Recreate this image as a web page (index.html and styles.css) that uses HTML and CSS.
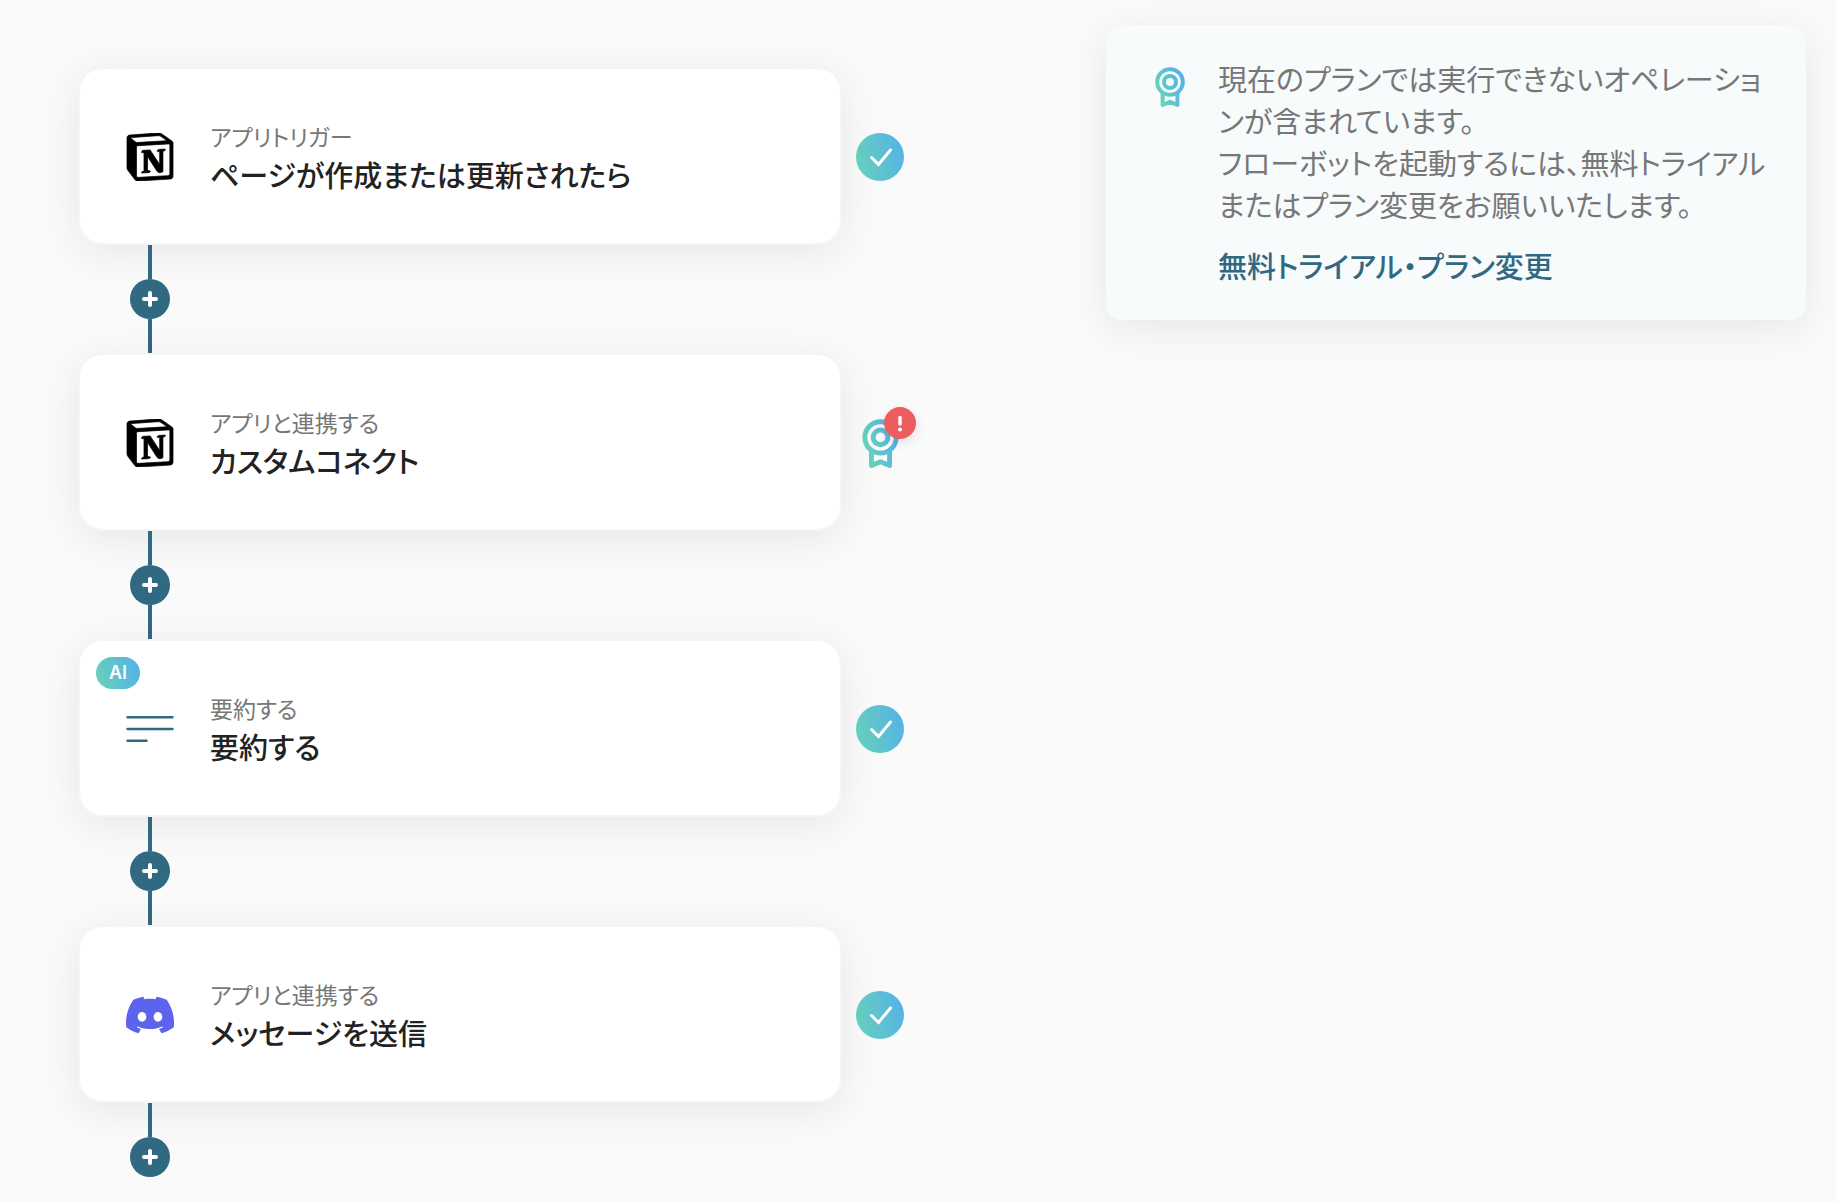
FILE: index.html
```html
<!DOCTYPE html>
<html lang="ja">
<head>
<meta charset="utf-8">
<meta name="viewport" content="width=device-width, initial-scale=1">
<title>フローボット</title>
<link rel="stylesheet" href="styles.css">
</head>
<body>
<svg class="defs" aria-hidden="true">
  <defs>
    <linearGradient id="brand" gradientUnits="userSpaceOnUse" x1="2" y1="24" x2="29" y2="14">
      <stop offset="0" stop-color="#67d2b8"/>
      <stop offset="1" stop-color="#55b0ea"/>
    </linearGradient>
    <symbol id="award" viewBox="0 0 30 40">
      <g fill="none" stroke="url(#brand)" stroke-width="4" stroke-linejoin="round" stroke-linecap="round">
        <circle cx="15" cy="15" r="12.800"/>
        <circle cx="15" cy="15" r="6"/>
        <path d="M7.600 26.500V38L15 34.800l7.400 3.200V26.500"/>
      </g>
    </symbol>
    <symbol id="check" viewBox="0 0 48 48">
      <path d="M15.500 24.500l7 7L34.500 17" fill="none" stroke="#fff" stroke-width="3" stroke-linecap="round" stroke-linejoin="miter"/>
    </symbol>
    <symbol id="plus" viewBox="0 0 40 40">
      <path d="M20 14v12M14 20h12" fill="none" stroke="#fff" stroke-width="4" stroke-linecap="round"/>
    </symbol>
    <symbol id="notion" viewBox="0 0 24 24">
      <path d="M4.459 4.208c.746.606 1.026.56 2.428.466l13.215-.793c.28 0 .047-.28-.046-.326L17.86 1.968c-.42-.326-.981-.7-2.055-.607L3.01 2.295c-.466.046-.56.28-.374.466zm.793 3.08v13.904c0 .747.373 1.027 1.214.98l14.523-.84c.841-.046.935-.56.935-1.167V6.354c0-.606-.233-.933-.748-.887l-15.177.887c-.56.047-.747.327-.747.933zm14.337.745c.093.42 0 .84-.42.888l-.7.14v10.264c-.608.327-1.168.514-1.635.514-.748 0-.935-.234-1.495-.933l-4.577-7.186v6.952L12.21 19s0 .84-1.168.84l-3.222.186c-.093-.186 0-.653.327-.746l.84-.233V9.854L7.822 9.76c-.094-.42.14-1.026.793-1.073l3.456-.233 4.764 7.279v-6.44l-1.215-.139c-.093-.514.28-.887.747-.933zM1.936 1.035l13.31-.98c1.634-.14 2.055-.047 3.082.7l4.249 2.986c.7.513.934.653.934 1.213v16.378c0 1.026-.373 1.634-1.680 1.726l-15.458.934c-.98.047-1.448-.093-1.962-.747l-3.129-4.060c-.56-.747-.793-1.306-.793-1.960V2.667c0-.839.374-1.540 1.447-1.632z" stroke="#000" stroke-width=".35"/>
    </symbol>
    <symbol id="discord" viewBox="0 0 24 24">
      <path fill="#5c64ee" d="M20.317 4.3698a19.7913 19.7913 0 00-4.8851-1.5152.0741.0741 0 00-.0785.0371c-.211.3753-.4447.8648-.6083 1.2495-1.8447-.2762-3.68-.2762-5.4868 0-.1636-.3933-.4058-.8742-.6177-1.2495a.077.077 0 00-.0785-.037 19.7363 19.7363 0 00-4.8852 1.515.0699.0699 0 00-.0321.0277C.5334 9.0458-.319 13.5799.0992 18.0578a.0824.0824 0 00.0312.0561c2.0528 1.5076 4.0413 2.4228 5.9929 3.0294a.0777.0777 0 00.0842-.0276c.4616-.6304.8731-1.2952 1.226-1.9942a.076.076 0 00-.0416-.1057c-.6528-.2476-1.2743-.5495-1.8722-.8923a.077.077 0 01-.0076-.1277c.1258-.0943.2517-.1923.3718-.2914a.0743.0743 0 01.0776-.0105c3.9278 1.7933 8.18 1.7933 12.0614 0a.0739.0739 0 01.0785.0095c.1202.099.246.1981.3728.2924a.077.077 0 01-.0066.1276 12.2986 12.2986 0 01-1.873.8914.0766.0766 0 00-.0407.1067c.3604.698.7719 1.3628 1.225 1.9932a.076.076 0 00.0842.0286c1.961-.6067 3.9495-1.5219 6.0023-3.0294a.077.077 0 00.0313-.0552c.5004-5.177-.8382-9.6739-3.5485-13.6604a.061.061 0 00-.0312-.0286zM8.02 15.3312c-1.1825 0-2.1569-1.0857-2.1569-2.419 0-1.3332.9555-2.4189 2.157-2.4189 1.2108 0 2.1757 1.0952 2.1568 2.419 0 1.3332-.9555 2.4189-2.1569 2.4189zm7.9748 0c-1.1825 0-2.1569-1.0857-2.1569-2.419 0-1.3332.9554-2.4189 2.1569-2.4189 1.2108 0 2.1757 1.0952 2.1568 2.419 0 1.3332-.946 2.4189-2.1568 2.4189Z"/>
    </symbol>
    <symbol id="lines" viewBox="0 0 48 48">
      <path d="M1.500 12.200h45M1.500 24h45M1.500 35.800h19" fill="none" stroke="#316882" stroke-width="2.400" stroke-linecap="round"/>
    </symbol>
  </defs>
</svg>

<main class="page">
  <ol class="flow">
    <li>
      <div class="step">
        <article class="card">
          <svg class="app-icon" aria-hidden="true"><use href="#notion"/></svg>
          <div>
            <p class="kind">アプリトリガー</p>
            <h2 class="title">ページが作成または更新されたら</h2>
          </div>
        </article>
        <span class="status done"><svg aria-hidden="true"><use href="#check"/></svg></span>
      </div>
      <div class="connector">
        <button type="button" class="add" aria-label="追加"><svg aria-hidden="true"><use href="#plus"/></svg></button>
      </div>
    </li>
    <li>
      <div class="step">
        <article class="card">
          <svg class="app-icon" aria-hidden="true"><use href="#notion"/></svg>
          <div>
            <p class="kind">アプリと連携する</p>
            <h2 class="title">カスタムコネクト</h2>
          </div>
        </article>
        <span class="status locked">
          <svg class="award-large" aria-hidden="true"><use href="#award"/></svg>
          <svg class="alert" viewBox="0 0 32 32" aria-hidden="true">
            <path d="M16 10.500v6.500" fill="none" stroke="#fff" stroke-width="3.400" stroke-linecap="round"/>
            <circle cx="16" cy="22.500" r="2" fill="#fff"/>
          </svg>
        </span>
      </div>
      <div class="connector">
        <button type="button" class="add" aria-label="追加"><svg aria-hidden="true"><use href="#plus"/></svg></button>
      </div>
    </li>
    <li>
      <div class="step">
        <article class="card">
          <span class="ai-badge">AI</span>
          <svg class="app-icon" aria-hidden="true"><use href="#lines"/></svg>
          <div>
            <p class="kind">要約する</p>
            <h2 class="title">要約する</h2>
          </div>
        </article>
        <span class="status done"><svg aria-hidden="true"><use href="#check"/></svg></span>
      </div>
      <div class="connector">
        <button type="button" class="add" aria-label="追加"><svg aria-hidden="true"><use href="#plus"/></svg></button>
      </div>
    </li>
    <li>
      <div class="step">
        <article class="card">
          <svg class="app-icon" aria-hidden="true"><use href="#discord"/></svg>
          <div>
            <p class="kind">アプリと連携する</p>
            <h2 class="title">メッセージを送信</h2>
          </div>
        </article>
        <span class="status done"><svg aria-hidden="true"><use href="#check"/></svg></span>
      </div>
      <div class="connector last">
        <button type="button" class="add" aria-label="追加"><svg aria-hidden="true"><use href="#plus"/></svg></button>
      </div>
    </li>
  </ol>

  <aside class="notice">
    <svg class="award-small" aria-hidden="true"><use href="#award"/></svg>
    <div class="notice-body">
      <p>現在のプランでは実行できないオペレーションが含まれています。<br>フローボットを起動するには、無料トライアルまたはプラン変更をお願いいたします。</p>
      <a href="#plan">無料トライアル・プラン変更</a>
    </div>
  </aside>
</main>
</body>
</html>
```
FILE: styles.css
```css
* {
  box-sizing: border-box;
}

body {
  margin: 0;
  background: #fafafa;
  color: #222;
  font-family: "Noto Sans CJK JP", "Noto Sans", sans-serif;
  font-size: 29px;
  font-feature-settings: "palt";
}

p,
h2 {
  margin: 0;
}

.defs {
  position: absolute;
  width: 0;
  height: 0;
}

.page {
  display: grid;
  grid-template-columns: minmax(0, 826fr) minmax(0, 700fr);
  column-gap: 202px;
  align-items: start;
  padding: 25px 30px 25px 78px;
}

.flow {
  margin: 0;
  padding: 42px 0 0;
  list-style: none;
}

.step {
  display: flex;
  align-items: center;
  gap: 14px;
}

.card {
  position: relative;
  display: flex;
  flex: 1;
  align-items: center;
  gap: 36px;
  min-height: 178px;
  padding: 34px 44px 32px 46px;
  background: #fff;
  background-clip: padding-box;
  border: 2px solid #f5f5f5;
  border-radius: 24px;
  box-shadow: 0 8px 40px rgba(0, 0, 0, 0.08);
}

.app-icon {
  flex: none;
  width: 48px;
  height: 48px;
}

.kind {
  color: #777;
  font-size: 23px;
  line-height: 34px;
}

.title {
  font-size: 29px;
  font-weight: 500;
  line-height: 42px;
}

.ai-badge {
  position: absolute;
  top: 16px;
  left: 16px;
  width: 44px;
  border-radius: 16px;
  background: linear-gradient(75deg, #67d2b8, #55b0ea);
  color: #fff;
  font-family: Inter, sans-serif;
  font-size: 18px;
  font-weight: 600;
  line-height: 32px;
  text-align: center;
}

.status {
  position: relative;
  display: flex;
  flex: none;
  justify-content: center;
  align-items: center;
  width: 48px;
  height: 48px;
  margin-top: 2px;
}

.done {
  border-radius: 50%;
  background: linear-gradient(75deg, #67d2b8, #55b0ea);
}

.done svg {
  width: 48px;
  height: 48px;
}

.award-large {
  width: 37px;
  height: 49px;
}

.alert {
  position: absolute;
  top: -12px;
  right: -12px;
  width: 32px;
  height: 32px;
  border-radius: 50%;
  background: #eb5d5f;
  box-shadow: 0 4px 12px rgba(0, 0, 0, 0.1);
}

.connector {
  position: relative;
  display: flex;
  flex-direction: column;
  align-items: center;
  width: 40px;
  margin-left: 52px;
}

.connector::before,
.connector::after {
  content: "";
  width: 4px;
  height: 34px;
  background: #316882;
}

.connector.last::after {
  display: none;
}

.add {
  width: 40px;
  height: 40px;
  padding: 0;
  border: 0;
  border-radius: 50%;
  background: #316882;
  cursor: pointer;
}

.add svg {
  display: block;
  width: 40px;
  height: 40px;
}

.notice {
  display: flex;
  align-items: flex-start;
  gap: 33px;
  padding: 32px 40px 34px 49px;
  border-radius: 16px;
  background: #f7fbfc;
  box-shadow: 0 8px 40px rgba(0, 0, 0, 0.08);
  color: #777;
  line-height: 42px;
}

.award-small {
  flex: none;
  width: 30px;
  height: 40px;
  margin-top: 10px;
}

.notice-body {
  display: flex;
  flex: 1;
  flex-direction: column;
  align-items: flex-start;
  gap: 19px;
}

.notice a {
  color: #316882;
  font-weight: 500;
  text-decoration: none;
}
```
